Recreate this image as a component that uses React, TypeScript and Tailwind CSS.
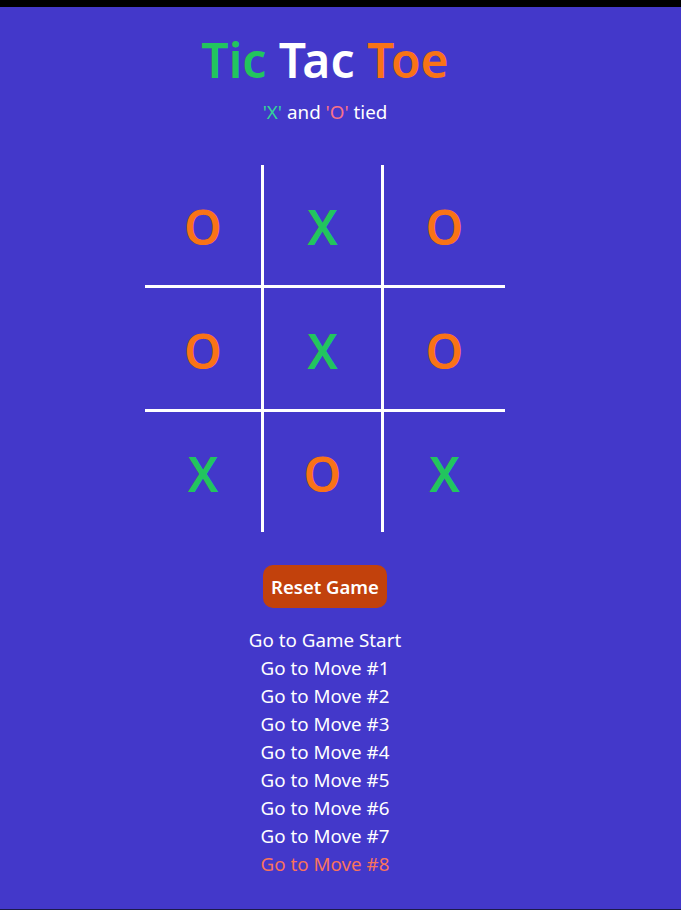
import React from "react";

type Mark = "X" | "O";

const board: Mark[] = ["O", "X", "O", "O", "X", "O", "X", "O", "X"];

const moves = [
  "Go to Game Start",
  "Go to Move #1",
  "Go to Move #2",
  "Go to Move #3",
  "Go to Move #4",
  "Go to Move #5",
  "Go to Move #6",
  "Go to Move #7",
  "Go to Move #8",
];

function Cell({ mark, index }: { mark: Mark; index: number }) {
  const col = index % 3;
  const row = Math.floor(index / 3);
  return (
    <button
      className={
        "flex items-center justify-center pt-1 text-5xl font-[560] leading-none border-white " +
        (col < 2 ? "border-r-[3px] " : "") +
        (row < 2 ? "border-b-[3px] " : "") +
        (mark === "X" ? "text-[#22c55e]" : "text-[#f97316]")
      }
    >
      {mark}
    </button>
  );
}

export default function App() {
  return (
    <div
      className="min-h-[910px] w-full border-t-[7px] border-b border-t-black border-b-[#1c1a4a] bg-[#4338ca] text-white"
      style={{ fontFamily: '"Noto Sans", "Open Sans", sans-serif' }}
    >
      <div className="flex w-[650px] flex-col items-center pt-[29px]">
        <h1 className="text-5xl font-semibold leading-[48px]">
          <span className="text-[#22c55e]">Tic</span>{" "}
          <span className="text-white">Tac</span>{" "}
          <span className="text-[#f97316]">Toe</span>
        </h1>
        <p className="mt-[14px] text-[18.8px] leading-7">
          <span className="text-[#34d399]">'X'</span> and{" "}
          <span className="text-[#f87189]">'O'</span> tied
        </p>

        <div className="mt-[39px] grid grid-cols-[119px_120px_121px] grid-rows-[123px_124px_120px]">
          {board.map((m, i) => (
            <Cell key={i} mark={m} index={i} />
          ))}
        </div>

        <button className="mt-[33px] h-[43px] w-[124px] rounded-[10px] bg-[#c2410c] text-[18.5px] font-semibold text-white">
          Reset Game
        </button>

        <ul className="mt-[18px] flex flex-col items-center text-[18.8px] leading-7">
          {moves.map((m, i) => (
            <li key={m}>
              <button className={i === moves.length - 1 ? "text-[#f9735b]" : "text-white"}>
                {m}
              </button>
            </li>
          ))}
        </ul>
      </div>
    </div>
  );
}
